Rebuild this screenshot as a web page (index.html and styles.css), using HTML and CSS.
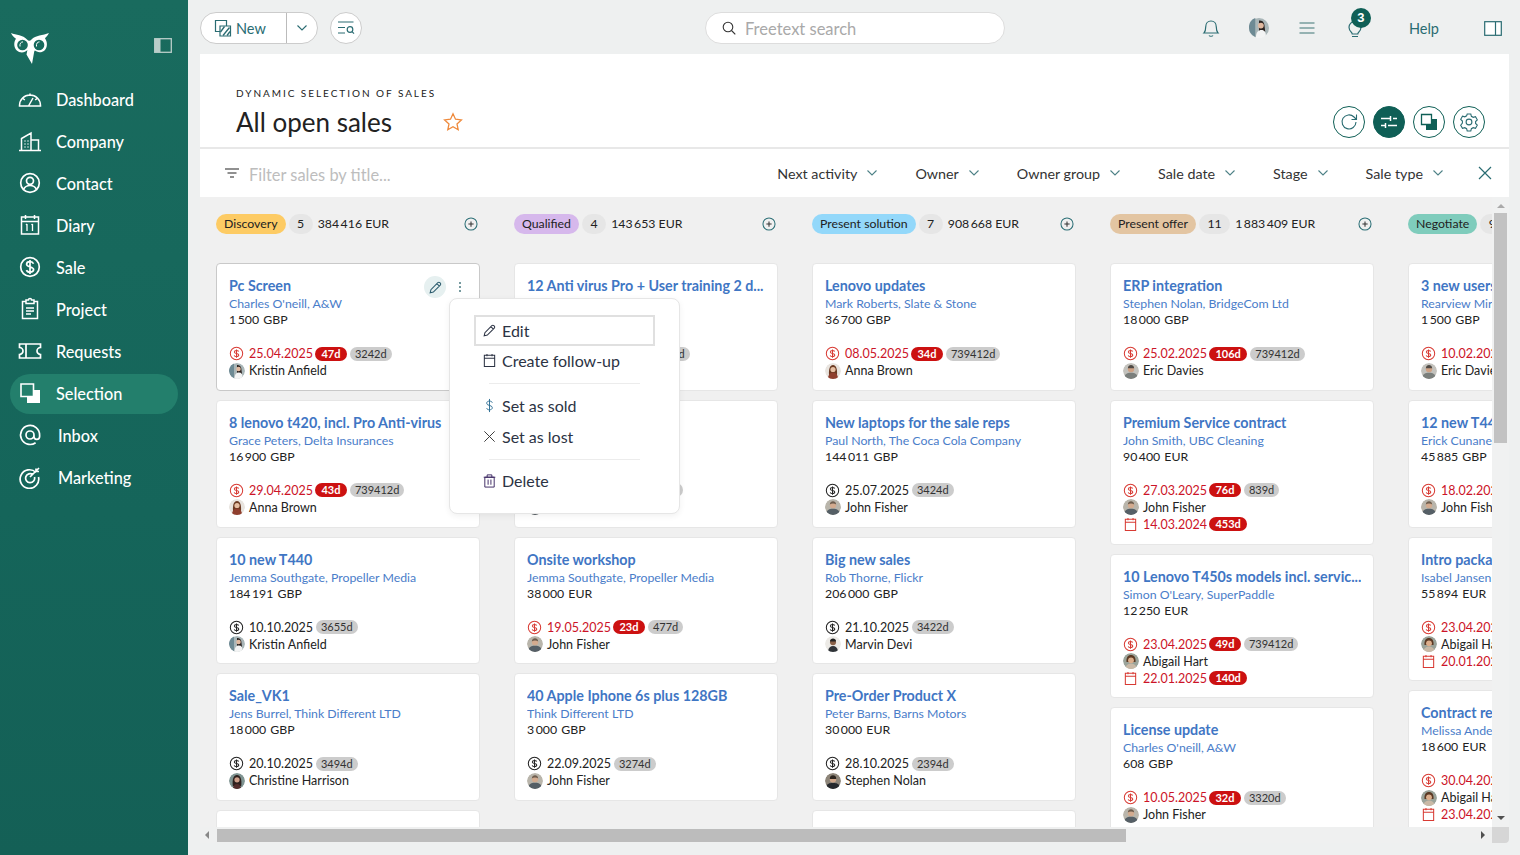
FILE: index.html
```html
<!DOCTYPE html>
<html lang="en">
<head>
<meta charset="utf-8">
<title>All open sales</title>
<link rel="stylesheet" href="styles.css">
</head>
<body>
<svg class="sprite" aria-hidden="true">
  <defs>
    <symbol id="i-sale" viewBox="0 0 16 16"><circle cx="8" cy="8" r="6.6" fill="none" stroke="currentColor" stroke-width="1.1"/><path d="M10.3 5.9C9.9 5 9 4.7 8 4.7c-1.3 0-2.3.6-2.3 1.7 0 2.4 4.7 1 4.7 3.3 0 1.1-1.1 1.6-2.4 1.6-1.1 0-2.1-.4-2.5-1.3M8 3.6v8.8" fill="none" stroke="currentColor" stroke-width="1.1"/></symbol>
    <symbol id="i-cal" viewBox="0 0 16 16"><path d="M2.5 2.5h11v12h-11zM2.5 5.6h11M5.3 1v2.4M10.7 1v2.4" fill="none" stroke="currentColor" stroke-width="1.1"/></symbol>
    <symbol id="i-chev" viewBox="0 0 12 8"><path d="M1.5 1.5 6 6l4.5-4.500" fill="none" stroke="currentColor" stroke-width="1.1"/></symbol>
    <symbol id="i-plus" viewBox="0 0 16 16"><circle cx="8" cy="8" r="6.900" fill="none" stroke="#2c6f76" stroke-width="1.2"/><path d="M8 5v6M5 8h6" fill="none" stroke="#333" stroke-width="1.2"/></symbol>
    <symbol id="i-pen" viewBox="0 0 16 16"><path d="M2.3 13.7l.8-3.400 7.400-7.400a1.500 1.500 0 0 1 2.100 0l.5.5a1.500 1.500 0 0 1 0 2.100l-7.400 7.400zM9.500 3.900l2.600 2.600" fill="none" stroke="currentColor" stroke-width="1.1"/></symbol>
    <symbol id="a-kristin" viewBox="0 0 16 16"><circle cx="8" cy="8" r="8" fill="#a9b6b8"/><path d="M0 8a8 8 0 0 0 5 7V0A8 8 0 0 0 0 8" fill="#6d8a94"/><path d="M8 2c3-.5 4.500 2 4.500 5l.5 4H8z" fill="#2b2320"/><circle cx="9.500" cy="6" r="2.300" fill="#e0b9a0"/><path d="M5.500 16c0-5 2-6.500 4.500-6.500s3.500 2 3.500 4.500a8 8 0 0 1-8 2" fill="#f3f4f4"/></symbol>
    <symbol id="a-anna" viewBox="0 0 16 16"><circle cx="8" cy="8" r="8" fill="#e8e4df"/><path d="M4 12c-.5-6 1-10 4-10s4.500 4 4 10z" fill="#6b3a22"/><circle cx="8" cy="6.500" r="2.600" fill="#e6bfa3"/><path d="M3 15c.6-4 2.500-5.500 5-5.500s4.400 1.500 5 5.500a8 8 0 0 1-10 0" fill="#8f3f2e"/></symbol>
    <symbol id="a-john" viewBox="0 0 16 16"><circle cx="8" cy="8" r="8" fill="#b9b5ab"/><circle cx="8" cy="6" r="3.200" fill="#d3ab8f"/><path d="M4.800 5.500C5 3 6.500 2.300 8 2.300s3 .7 3.200 3.200C9.500 4.300 6.500 4.300 4.800 5.500" fill="#6d5d4e"/><path d="M1.500 12.700C3 10 5.500 9.700 8 9.700s5 .3 6.500 3A8 8 0 0 1 8 16a8 8 0 0 1-6.500-3.300" fill="#555f66"/></symbol>
    <symbol id="a-eric" viewBox="0 0 16 16"><circle cx="8" cy="8" r="8" fill="#c3c2bd"/><circle cx="8" cy="6" r="3.200" fill="#cfa285"/><path d="M4.800 5.200C5 2.800 6.500 2 8 2s3 .8 3.200 3.200z" fill="#4f4a45"/><path d="M1.500 12.700C3 10 5.500 9.700 8 9.700s5 .3 6.500 3A8 8 0 0 1 8 16a8 8 0 0 1-6.500-3.300" fill="#7b7f7c"/></symbol>
    <symbol id="a-abigail" viewBox="0 0 16 16"><circle cx="8" cy="8" r="8" fill="#9aa39a"/><path d="M3.500 9c-.5-4.500 1.500-7 4.500-7s5 2.500 4.500 7z" fill="#5b3a25"/><circle cx="8" cy="7.300" r="2.900" fill="#dcae8c"/><path d="M2.500 14C4 11 6 10.500 8 10.500s4 .5 5.500 3.500A8 8 0 0 1 2.500 14" fill="#c9b9a6"/></symbol>
    <symbol id="a-christine" viewBox="0 0 16 16"><circle cx="8" cy="8" r="8" fill="#7f9492"/><path d="M3.800 13c-.8-7 .8-11 4.200-11s5 4 4.200 11z" fill="#2e211e"/><circle cx="8" cy="6.800" r="2.600" fill="#cf9f8a"/><path d="M4 15c.6-3 2-4 4-4s3.400 1 4 4a8 8 0 0 1-8 0" fill="#532d2c"/></symbol>
    <symbol id="a-marvin" viewBox="0 0 16 16"><circle cx="8" cy="8" r="8" fill="#eceae6"/><circle cx="8" cy="6.300" r="3" fill="#8a6148"/><path d="M5 5.600C5 3.300 6.500 2.600 8 2.600s3 .7 3 3z" fill="#222"/><path d="M3 15c.6-3.500 2.500-5 5-5s4.400 1.500 5 5a8 8 0 0 1-10 0" fill="#2f3338"/></symbol>
    <symbol id="a-stephen" viewBox="0 0 16 16"><circle cx="8" cy="8" r="8" fill="#8d8579"/><circle cx="8" cy="6.300" r="3.200" fill="#d1a78a"/><path d="M4.800 6C4.600 3.200 6.300 2.200 8 2.200s3.400 1 3.200 3.800z" fill="#2d2620"/><path d="M1.500 12.700C3 10 5.500 10 8 10s5 0 6.500 2.700A8 8 0 0 1 8 16a8 8 0 0 1-6.500-3.300" fill="#26292d"/></symbol>
  </defs>
</svg>

<div class="app">
  <aside class="sidebar">
    <div class="brand">
      <svg class="logo" viewBox="0 0 40 32"><path d="M1 1c5 2.500 12 1.500 16 6.500 1.500 1.800 3 1.800 4.500.1C25.500 3 33 3.500 39 1c-1.500 3-3.500 4.300-4 5.500 2.500 3 2.800 9-.5 12-2.800 2.500-7.400 2.300-10-.4L22 32l-5.500-9.500.9-4.500c-2.600 3.100-7.700 3.300-10.600.5C3.600 15.500 3.600 10 6 6.800 4.300 5.500 2.300 3.800 1 1z" fill="#fff"/><circle cx="12.500" cy="13" r="5.300" fill="#176a5d"/><circle cx="29" cy="13" r="5.300" fill="#176a5d"/><path d="M10 14.500c-.5-3 1-4.600 3-4.600M26.500 14.500c-.5-3 1-4.600 3-4.600" fill="none" stroke="#fff" stroke-width="1"/><path d="M22 14.500l3 3.500-3 4.500-3-4.500z" fill="#fff"/></svg>
      <svg class="toggle" viewBox="0 0 18 15"><rect x=".7" y=".7" width="16.600" height="13.600" fill="none" stroke="#b9cdc9" stroke-width="1.300"/><rect x="1" y="1" width="5.500" height="13" fill="#b9cdc9"/></svg>
    </div>
    <nav class="nav">
      <a class="nav-item"><svg class="nav-icon" viewBox="0 0 24 24"><path d="M1.500 18.500a10.500 10.500 0 0 1 21 0v.5h-21zM12 6.500V9M5 11.500l1.800 1.500M19 11.500l-1.800 1.500M10.500 19l4.500-8" fill="none" stroke="#fff" stroke-width="1.500"/></svg>Dashboard</a>
      <a class="nav-item"><svg class="nav-icon" viewBox="0 0 24 24"><path d="M1 21.500h22M3.500 21.500V9.500L13 4v17.500M13 11h7.500v10.500M6.500 12h1M9.500 12h1M6.500 15h1M9.500 15h1M6.500 18h1M9.500 18h1" fill="none" stroke="#fff" stroke-width="1.500"/></svg>Company</a>
      <a class="nav-item"><svg class="nav-icon" viewBox="0 0 24 24"><circle cx="12" cy="12" r="9.300" fill="none" stroke="#fff" stroke-width="1.700"/><circle cx="12" cy="9.800" r="3.500" fill="none" stroke="#fff" stroke-width="1.700"/><path d="M5.500 18.500c1.300-3 3.500-4 6.500-4s5.200 1 6.500 4" fill="none" stroke="#fff" stroke-width="1.700"/></svg>Contact</a>
      <a class="nav-item"><svg class="nav-icon" viewBox="0 0 24 24"><path d="M3.500 4h17v17h-17zM3.500 8.500h17M7.500 2v4M16.500 2v4" fill="none" stroke="#fff" stroke-width="1.500"/><path d="M9 11v7M8 12l1-1M14.500 11v7M13.500 12l1-1" fill="none" stroke="#fff" stroke-width="1.300"/></svg>Diary</a>
      <a class="nav-item"><svg class="nav-icon" viewBox="0 0 24 24"><circle cx="12" cy="12" r="9.300" fill="none" stroke="#fff" stroke-width="1.700"/><path d="M15.500 8.700c-.5-1.300-1.900-2-3.500-2-1.900 0-3.400.9-3.400 2.600 0 3.500 7 1.800 7 5.300 0 1.700-1.600 2.500-3.600 2.500-1.700 0-3.100-.7-3.600-2M12 5v14" fill="none" stroke="#fff" stroke-width="1.700"/></svg>Sale</a>
      <a class="nav-item"><svg class="nav-icon" viewBox="0 0 24 24"><path d="M8 4.500H4.500v17h15v-17H16M8 3h2.500a1.500 1.500 0 0 1 3 0H16v3.500H8zM8 11h8M8 14h8M8 17h5" fill="none" stroke="#fff" stroke-width="1.500"/></svg>Project</a>
      <a class="nav-item"><svg class="nav-icon" viewBox="0 0 24 24"><path d="M1.500 5h21v3.500a3.500 3.500 0 0 0 0 7V19h-21v-3.500a3.500 3.500 0 0 0 0-7zM8 5v14" fill="none" stroke="#fff" stroke-width="1.700"/></svg>Requests</a>
      <a class="nav-item active"><svg class="nav-icon" viewBox="0 0 24 24"><path d="M9 9h13v13H9z" fill="#fff"/><path d="M3 3h12.500v12.500H3z" fill="#237f6c" stroke="#fff" stroke-width="1.600"/></svg>Selection</a>
      <a class="nav-item nudge"><svg class="nav-icon" viewBox="0 0 24 24"><path d="M16 12a4 4 0 1 1-8 0 4 4 0 0 1 8 0v1.500a2.800 2.800 0 0 0 5.600 0V12a9.500 9.500 0 1 0-4 7.700" fill="none" stroke="#fff" stroke-width="1.700"/></svg>Inbox</a>
      <a class="nav-item nudge"><svg class="nav-icon" viewBox="0 0 24 24"><path d="M18 7.500A9.300 9.300 0 1 0 20.500 12M14.800 9.500a4.500 4.500 0 1 0 1.700 2.500M12 12l9-9M18 3.500v3h3" fill="none" stroke="#fff" stroke-width="1.700"/></svg>Marketing</a>
    </nav>
  </aside>

  <main class="main">
    <header class="topbar">
      <div class="new-btn">
        <span class="new-main"><svg class="ic-18" viewBox="0 0 18 18"><path d="M1.500 1.500h11v11h-11z" fill="none" stroke="#2a6c72" stroke-width="1.200"/><path d="M6 7h10.500v10H6z" fill="#fff" stroke="#2a6c72" stroke-width="1.200"/><path d="M6.500 13l4-5.500M9 16.500l6.500-8M13 16.500l3-4" fill="none" stroke="#2a6c72" stroke-width="1.300"/></svg>New</span>
        <span class="new-drop"><svg class="chev-btn" viewBox="0 0 12 8"><use href="#i-chev"/></svg></span>
      </div>
      <button class="round-btn"><svg class="ic-18" viewBox="0 0 18 18"><path d="M1 3h15.500M1 8.500h7M1 14h7" fill="none" stroke="#2a6c72" stroke-width="1.200"/><circle cx="13" cy="10.500" r="2.800" fill="none" stroke="#2a6c72" stroke-width="1.200"/><path d="M15 12.700l2 2" fill="none" stroke="#2a6c72" stroke-width="1.200"/></svg></button>
      <div class="search"><svg class="ic-14" viewBox="0 0 14 14"><circle cx="6" cy="6" r="4.800" fill="none" stroke="#333" stroke-width="1.100"/><path d="M9.500 9.500l3.800 3.800" fill="none" stroke="#333" stroke-width="1.100"/></svg><span>Freetext search</span></div>
      <div class="top-right">
        <svg class="top-ic bell" viewBox="0 0 18 20"><path d="M2 15c1.500-1.500 1.700-3 1.700-6 0-3.500 2.200-6 5.300-6s5.300 2.500 5.300 6c0 3 .2 4.500 1.700 6zM7 17.500c.8 1 3.200 1 4 0" fill="none" stroke="#2a6c72" stroke-width="1.200"/></svg>
        <svg class="top-avatar" viewBox="0 0 16 16"><use href="#a-kristin"/></svg>
        <svg class="top-ic menu-ic" viewBox="0 0 18 14"><path d="M1.500 2h15M1.500 7h15M1.500 12h15" fill="none" stroke="#3c7474" stroke-width="1.200"/></svg>
        <span class="bulb"><svg class="top-ic" viewBox="0 0 18 20"><path d="M5.500 14.500C3.800 13 3 11.300 3 9.300a6 6 0 0 1 12 0c0 2-.8 3.700-2.500 5.200-.5.500-.7 1-.7 1.500H6.200c0-.5-.2-1-.7-1.500zM6 18.500h6" fill="none" stroke="#2a6c72" stroke-width="1.200"/></svg><b class="badge">3</b></span>
        <span class="help">Help</span>
        <svg class="top-ic panel-ic" viewBox="0 0 18 15"><rect x=".7" y=".7" width="16.600" height="13.600" fill="#fff" stroke="#2a6c72" stroke-width="1.200"/><path d="M11.500 1v13" stroke="#2a6c72" stroke-width="1.200"/></svg>
      </div>
    </header>

    <section class="panel">
      <div class="head">
        <div class="head-titles">
          <div class="eyebrow">DYNAMIC SELECTION OF SALES</div>
          <div class="title-row"><h1>All open sales</h1><svg class="star" viewBox="0 0 20 20"><path d="M10 1.800l2.500 5.400 5.900.7-4.400 4 1.200 5.800L10 14.800l-5.200 2.900L6 11.900l-4.400-4 5.900-.7z" fill="none" stroke="#ef8a3c" stroke-width="1.300"/></svg></div>
        </div>
        <div class="actions">
          <button class="act"><svg class="ic-20" viewBox="0 0 20 20"><path d="M17 10a7 7 0 1 1-2-5l2.500 2.500M17.500 2.500v5h-5" fill="none" stroke="#2a6c72" stroke-width="1.100"/></svg></button>
          <button class="act filled"><svg class="ic-20" viewBox="0 0 20 20"><path d="M2 6.500h9M14 6.500h4M11.500 4v5M2 13.500h4M9 13.500h9M6.500 11v5" fill="none" stroke="#fff" stroke-width="1.500"/></svg></button>
          <button class="act"><svg class="ic-20" viewBox="0 0 20 20"><path d="M7 7h11v11H7z" fill="#0f5f56"/><path d="M2.500 2.500h10v10h-10z" fill="#fff" stroke="#0f5f56" stroke-width="1.300"/></svg></button>
          <button class="act"><svg class="ic-20" viewBox="0 0 20 20"><path d="M8.200 2h3.600l.6 2.300 1.800 1 2.300-.6 1.800 3.100-1.700 1.700v2l1.700 1.700-1.800 3.100-2.300-.6-1.800 1-.6 2.300H8.200l-.6-2.300-1.800-1-2.300.6-1.800-3.100L3.400 11V9L1.700 7.300l1.800-3.100 2.300.6 1.800-1z" fill="none" stroke="#2a6c72" stroke-width="1.100"/><circle cx="10" cy="10" r="2.900" fill="none" stroke="#2a6c72" stroke-width="1.100"/></svg></button>
        </div>
      </div>

      <div class="filters">
        <svg class="filter-ic" viewBox="0 0 14 10"><path d="M0 1h14M2.500 5h9M5 9h4" fill="none" stroke="#222" stroke-width="1.200"/></svg>
        <span class="filter-input">Filter sales by title...</span>
        <div class="filter-list">
          <span class="fl">Next activity<svg class="chev" viewBox="0 0 12 8"><use href="#i-chev"/></svg></span>
          <span class="fl">Owner<svg class="chev" viewBox="0 0 12 8"><use href="#i-chev"/></svg></span>
          <span class="fl">Owner group<svg class="chev" viewBox="0 0 12 8"><use href="#i-chev"/></svg></span>
          <span class="fl">Sale date<svg class="chev" viewBox="0 0 12 8"><use href="#i-chev"/></svg></span>
          <span class="fl">Stage<svg class="chev" viewBox="0 0 12 8"><use href="#i-chev"/></svg></span>
          <span class="fl">Sale type<svg class="chev" viewBox="0 0 12 8"><use href="#i-chev"/></svg></span>
          <svg class="close" viewBox="0 0 14 14"><path d="M1 1l12 12M13 1L1 13" fill="none" stroke="#2a6c72" stroke-width="1.200"/></svg>
        </div>
      </div>

      <div class="scroller">
        <div class="board">

          <div class="col">
            <div class="col-head"><span class="stage s-discovery">Discovery</span><span class="count">5</span><span class="total">384&#8201;416 EUR</span><svg class="add" viewBox="0 0 16 16"><use href="#i-plus"/></svg></div>
            <article class="card hovered">
              <div class="card-tools"><span class="pen"><svg viewBox="0 0 16 16"><use href="#i-pen"/></svg></span><span class="dots"><i></i><i></i><i></i></span></div>
              <a class="c-title">Pc Screen</a><a class="c-person">Charles O'neill, A&amp;W</a><div class="c-amount">1&#8201;500 GBP</div>
              <div class="row late"><svg class="ri"><use href="#i-sale"/></svg>25.04.2025<b class="pill red">47d</b><b class="pill grey">3242d</b></div>
              <div class="row"><svg class="ava"><use href="#a-kristin"/></svg>Kristin Anfield</div>
            </article>
            <article class="card">
              <a class="c-title">8 lenovo t420, incl. Pro Anti-virus</a><a class="c-person">Grace Peters, Delta Insurances</a><div class="c-amount">16&#8201;900 GBP</div>
              <div class="row late"><svg class="ri"><use href="#i-sale"/></svg>29.04.2025<b class="pill red">43d</b><b class="pill grey">739412d</b></div>
              <div class="row"><svg class="ava"><use href="#a-anna"/></svg>Anna Brown</div>
            </article>
            <article class="card">
              <a class="c-title">10 new T440</a><a class="c-person">Jemma Southgate, Propeller Media</a><div class="c-amount">184&#8201;191 GBP</div>
              <div class="row"><svg class="ri"><use href="#i-sale"/></svg>10.10.2025<b class="pill grey">3655d</b></div>
              <div class="row"><svg class="ava"><use href="#a-kristin"/></svg>Kristin Anfield</div>
            </article>
            <article class="card">
              <a class="c-title">Sale_VK1</a><a class="c-person">Jens Burrel, Think Different LTD</a><div class="c-amount">18&#8201;000 GBP</div>
              <div class="row"><svg class="ri"><use href="#i-sale"/></svg>20.10.2025<b class="pill grey">3494d</b></div>
              <div class="row"><svg class="ava"><use href="#a-christine"/></svg>Christine Harrison</div>
            </article>
            <article class="card stub"></article>
          </div>

          <div class="col">
            <div class="col-head"><span class="stage s-qualified">Qualified</span><span class="count">4</span><span class="total">143&#8201;653 EUR</span><svg class="add" viewBox="0 0 16 16"><use href="#i-plus"/></svg></div>
            <article class="card">
              <a class="c-title">12 Anti virus Pro + User training 2 d...</a><a class="c-person">Charles O'neill, A&amp;W</a><div class="c-amount">12&#8201;000 GBP</div>
              <div class="row late"><svg class="ri"><use href="#i-sale"/></svg>25.04.2025<b class="pill red">47d</b><b class="pill grey">3242d</b></div>
              <div class="row"><svg class="ava"><use href="#a-john"/></svg>John Fisher</div>
            </article>
            <article class="card">
              <a class="c-title">Onsite training</a><a class="c-person">Grace Peters</a><div class="c-amount">9&#8201;000 GBP</div>
              <div class="row late"><svg class="ri"><use href="#i-sale"/></svg>19.05.2025<b class="pill red">23d</b><b class="pill grey">477d</b></div>
              <div class="row"><svg class="ava"><use href="#a-john"/></svg>John Fisher</div>
            </article>
            <article class="card">
              <a class="c-title">Onsite workshop</a><a class="c-person">Jemma Southgate, Propeller Media</a><div class="c-amount">38&#8201;000 EUR</div>
              <div class="row late"><svg class="ri"><use href="#i-sale"/></svg>19.05.2025<b class="pill red">23d</b><b class="pill grey">477d</b></div>
              <div class="row"><svg class="ava"><use href="#a-john"/></svg>John Fisher</div>
            </article>
            <article class="card">
              <a class="c-title">40 Apple Iphone 6s plus 128GB</a><a class="c-person">Think Different LTD</a><div class="c-amount">3&#8201;000 GBP</div>
              <div class="row"><svg class="ri"><use href="#i-sale"/></svg>22.09.2025<b class="pill grey">3274d</b></div>
              <div class="row"><svg class="ava"><use href="#a-john"/></svg>John Fisher</div>
            </article>
          </div>

          <div class="col">
            <div class="col-head"><span class="stage s-solution">Present solution</span><span class="count">7</span><span class="total">908&#8201;668 EUR</span><svg class="add" viewBox="0 0 16 16"><use href="#i-plus"/></svg></div>
            <article class="card">
              <a class="c-title">Lenovo updates</a><a class="c-person">Mark Roberts, Slate &amp; Stone</a><div class="c-amount">36&#8201;700 GBP</div>
              <div class="row late"><svg class="ri"><use href="#i-sale"/></svg>08.05.2025<b class="pill red">34d</b><b class="pill grey">739412d</b></div>
              <div class="row"><svg class="ava"><use href="#a-anna"/></svg>Anna Brown</div>
            </article>
            <article class="card">
              <a class="c-title">New laptops for the sale reps</a><a class="c-person">Paul North, The Coca Cola Company</a><div class="c-amount">144&#8201;011 GBP</div>
              <div class="row"><svg class="ri"><use href="#i-sale"/></svg>25.07.2025<b class="pill grey">3424d</b></div>
              <div class="row"><svg class="ava"><use href="#a-john"/></svg>John Fisher</div>
            </article>
            <article class="card">
              <a class="c-title">Big new sales</a><a class="c-person">Rob Thorne, Flickr</a><div class="c-amount">206&#8201;000 GBP</div>
              <div class="row"><svg class="ri"><use href="#i-sale"/></svg>21.10.2025<b class="pill grey">3422d</b></div>
              <div class="row"><svg class="ava"><use href="#a-marvin"/></svg>Marvin Devi</div>
            </article>
            <article class="card">
              <a class="c-title">Pre-Order Product X</a><a class="c-person">Peter Barns, Barns Motors</a><div class="c-amount">30&#8201;000 EUR</div>
              <div class="row"><svg class="ri"><use href="#i-sale"/></svg>28.10.2025<b class="pill grey">2394d</b></div>
              <div class="row"><svg class="ava"><use href="#a-stephen"/></svg>Stephen Nolan</div>
            </article>
            <article class="card stub"></article>
          </div>

          <div class="col">
            <div class="col-head"><span class="stage s-offer">Present offer</span><span class="count">11</span><span class="total">1&#8201;883&#8201;409 EUR</span><svg class="add" viewBox="0 0 16 16"><use href="#i-plus"/></svg></div>
            <article class="card">
              <a class="c-title">ERP integration</a><a class="c-person">Stephen Nolan, BridgeCom Ltd</a><div class="c-amount">18&#8201;000 GBP</div>
              <div class="row late"><svg class="ri"><use href="#i-sale"/></svg>25.02.2025<b class="pill red">106d</b><b class="pill grey">739412d</b></div>
              <div class="row"><svg class="ava"><use href="#a-eric"/></svg>Eric Davies</div>
            </article>
            <article class="card">
              <a class="c-title">Premium Service contract</a><a class="c-person">John Smith, UBC Cleaning</a><div class="c-amount">90&#8201;400 EUR</div>
              <div class="row late"><svg class="ri"><use href="#i-sale"/></svg>27.03.2025<b class="pill red">76d</b><b class="pill grey">839d</b></div>
              <div class="row"><svg class="ava"><use href="#a-john"/></svg>John Fisher</div>
              <div class="row late"><svg class="ri"><use href="#i-cal"/></svg>14.03.2024<b class="pill red">453d</b></div>
            </article>
            <article class="card">
              <a class="c-title">10 Lenovo T450s models incl. servic...</a><a class="c-person">Simon O'Leary, SuperPaddle</a><div class="c-amount">12&#8201;250 EUR</div>
              <div class="row late"><svg class="ri"><use href="#i-sale"/></svg>23.04.2025<b class="pill red">49d</b><b class="pill grey">739412d</b></div>
              <div class="row"><svg class="ava"><use href="#a-abigail"/></svg>Abigail Hart</div>
              <div class="row late"><svg class="ri"><use href="#i-cal"/></svg>22.01.2025<b class="pill red">140d</b></div>
            </article>
            <article class="card">
              <a class="c-title">License update</a><a class="c-person">Charles O'neill, A&amp;W</a><div class="c-amount">608 GBP</div>
              <div class="row late"><svg class="ri"><use href="#i-sale"/></svg>10.05.2025<b class="pill red">32d</b><b class="pill grey">3320d</b></div>
              <div class="row"><svg class="ava"><use href="#a-john"/></svg>John Fisher</div>
            </article>
          </div>

          <div class="col">
            <div class="col-head"><span class="stage s-negotiate">Negotiate</span><span class="count">9</span><span class="total">774&#8201;120 EUR</span><svg class="add" viewBox="0 0 16 16"><use href="#i-plus"/></svg></div>
            <article class="card">
              <a class="c-title">3 new users</a><a class="c-person">Rearview Mirrors</a><div class="c-amount">1&#8201;500 GBP</div>
              <div class="row late"><svg class="ri"><use href="#i-sale"/></svg>10.02.2025</div>
              <div class="row"><svg class="ava"><use href="#a-eric"/></svg>Eric Davies</div>
            </article>
            <article class="card">
              <a class="c-title">12 new T440</a><a class="c-person">Erick Cunane</a><div class="c-amount">45&#8201;885 GBP</div>
              <div class="row late"><svg class="ri"><use href="#i-sale"/></svg>18.02.2025</div>
              <div class="row"><svg class="ava"><use href="#a-john"/></svg>John Fisher</div>
            </article>
            <article class="card">
              <a class="c-title">Intro package</a><a class="c-person">Isabel Jansen</a><div class="c-amount">55&#8201;894 EUR</div>
              <div class="row late"><svg class="ri"><use href="#i-sale"/></svg>23.04.2025</div>
              <div class="row"><svg class="ava"><use href="#a-abigail"/></svg>Abigail Hart</div>
              <div class="row late"><svg class="ri"><use href="#i-cal"/></svg>20.01.2025</div>
            </article>
            <article class="card">
              <a class="c-title">Contract renewal</a><a class="c-person">Melissa Anderson</a><div class="c-amount">18&#8201;600 EUR</div>
              <div class="row late"><svg class="ri"><use href="#i-sale"/></svg>30.04.2025</div>
              <div class="row"><svg class="ava"><use href="#a-abigail"/></svg>Abigail Hart</div>
              <div class="row late"><svg class="ri"><use href="#i-cal"/></svg>23.04.2025</div>
            </article>
          </div>

        </div>
        <div class="vbar"><i class="tri up"></i><span class="vthumb"></span><i class="tri down"></i></div>
        <div class="hbar"><i class="tri left"></i><span class="hthumb"></span><i class="tri right"></i></div>
        <div class="corner"></div>
      </div>

      <div class="menu">
        <div class="m-item focus"><svg class="m-ic" viewBox="0 0 16 16"><use href="#i-pen"/></svg>Edit</div>
        <div class="m-item"><svg class="m-ic" viewBox="0 0 16 16"><use href="#i-cal"/></svg>Create follow-up</div>
        <hr class="m-sep">
        <div class="m-item"><svg class="m-ic" viewBox="0 0 16 16"><path d="M11 5C10.600 3.800 9.400 3.300 8 3.300 6.300 3.300 5 4.100 5 5.600c0 3.100 6 1.600 6 4.700 0 1.500-1.400 2.300-3 2.300-1.500 0-2.700-.6-3.100-1.800M8 1v14" fill="none" stroke="#2a6c92" stroke-width="1"/></svg>Set as sold</div>
        <div class="m-item"><svg class="m-ic" viewBox="0 0 16 16"><path d="M2.500 2.500l11 11M13.500 2.500l-11 11" fill="none" stroke="#333" stroke-width="1"/></svg>Set as lost</div>
        <hr class="m-sep tight">
        <div class="m-item"><svg class="m-ic" viewBox="0 0 16 16"><path d="M3 4.500h10v10.500H3zM1.800 4.500h12.400M5.500 4.500V2h5v2.500M6.500 7v5.500M9.500 7v5.500" fill="none" stroke="#3a2560" stroke-width="1"/></svg>Delete</div>
      </div>
    </section>
  </main>
</div>
</body>
</html>
```

FILE: styles.css
```css
* { box-sizing: border-box; }
html, body { margin: 0; height: 100%; }
body {
  width: 1520px;
  height: 855px;
  overflow: hidden;
  font-family: Lato, "Noto Sans", sans-serif;
  color: #222;
  background: #eef0f0;
}
.sprite { width: 0; height: 0; display: block; overflow: hidden; }
.app { display: flex; height: 855px; }

/* Sidebar */
.sidebar {
  flex: 0 0 188px;
  background: linear-gradient(180deg, #196b5e 0%, #15655a 60%, #146056 100%);
  color: #fff;
}
.brand { height: 80px; display: flex; align-items: flex-start; justify-content: space-between; padding: 32px 16px 0 10px; }
.logo { width: 40px; height: 32px; }
.toggle { width: 18px; height: 15px; margin-top: 6px; }
.nav { display: flex; flex-direction: column; gap: 2px; padding: 0 10px; }
.nav-item {
  height: 40px;
  display: flex;
  align-items: center;
  gap: 14px;
  padding: 0 0 2px 8px;
  border-radius: 20px;
  font-size: 16.3px;
  font-weight: 500;
  color: #fff;
}
.nav-item.active { background: #237f6c; }
.nav-item.nudge { gap: 16px; }
.nav-icon { width: 24px; height: 24px; flex: none; }

/* Main */
.main { flex: 1; display: flex; flex-direction: column; padding: 0 11px 12px 12px; min-width: 0; }
.topbar { flex: 0 0 54px; display: flex; align-items: flex-start; padding-top: 12px; position: relative; }
.new-btn {
  width: 118px;
  height: 32px;
  display: flex;
  background: #fff;
  border: 1px solid #ccc;
  border-radius: 16px;
}
.new-main { flex: 1; display: flex; align-items: center; gap: 4px; padding-left: 13px; font-size: 14.5px; color: #2a6c72; border-right: 1px solid #bbb; }
.new-drop { flex: 0 0 30px; display: flex; align-items: center; justify-content: center; color: #2a6c72; }
.chev-btn { width: 12px; height: 8px; }
.ic-18 { width: 18px; height: 18px; }
.ic-14 { width: 14px; height: 14px; }
.ic-20 { width: 20px; height: 20px; }
.round-btn {
  width: 32px;
  height: 32px;
  margin-left: 12px;
  padding: 0;
  display: flex;
  align-items: center;
  justify-content: center;
  background: #fff;
  border: 1px solid #ccc;
  border-radius: 50%;
}
.search {
  width: 300px;
  height: 32px;
  margin: 0 0 0 343px;
  padding-left: 16px;
  display: flex;
  align-items: center;
  gap: 9px;
  background: #fff;
  border: 1px solid #ddd;
  border-radius: 16px;
  font-size: 16.5px;
  color: #a9a9a9;
}
.search span { padding-top: 2px; }
.top-right { margin-left: auto; display: flex; align-items: center; height: 32px; padding-right: 7px; }
.top-ic { width: 18px; height: 20px; display: block; }
.bell { margin-right: 28px; }
.top-avatar { width: 20px; height: 20px; margin: 0 29px 0 1px; }
.menu-ic { height: 14px; margin-right: 30px; }
.bulb { position: relative; display: block; margin-right: 45px; }
.badge {
  position: absolute;
  left: 5px;
  top: -10px;
  width: 20px;
  height: 20px;
  border-radius: 50%;
  background: #0f5f56;
  color: #fff;
  font: 700 13px/20px "Liberation Sans", sans-serif;
  text-align: center;
}
.help { font-size: 14.5px; color: #2a6c72; margin-right: 45px; }
.panel-ic { height: 15px; }

/* Panel */
.panel { flex: 1; min-height: 0; display: flex; flex-direction: column; background: #fff; position: relative; border-bottom-right-radius: 4px; overflow: hidden; }
.head { flex: 0 0 95px; display: flex; justify-content: space-between; padding: 33px 24px 0 36px; border-bottom: 2px solid #e8e8e8; }
.eyebrow { font-size: 10px; line-height: 12px; letter-spacing: 1.96px; color: #222; }
.title-row { display: flex; align-items: center; margin-top: 5px; }
h1 { margin: 0; font-size: 26px; line-height: 36px; font-weight: 400; color: #222; }
.star { width: 20px; height: 20px; margin-left: 51px; }
.actions { display: flex; gap: 8px; padding-top: 19px; }
.act { width: 32px; height: 32px; padding: 0; display: flex; align-items: center; justify-content: center; background: #fff; border: 1px solid #0f5f56; border-radius: 50%; }
.act.filled { background: #0f5f56; }

.filters { flex: 0 0 48px; display: flex; align-items: center; padding: 0 17px 0 25px; }
.filter-ic { width: 14px; height: 10px; }
.filter-input { margin: 2px 0 0 10px; font-size: 16.4px; color: #bdbdbd; }
.filter-list { margin-left: auto; display: flex; align-items: center; gap: 37px; font-size: 14.3px; color: #333; }
.fl { display: flex; align-items: center; gap: 9px; }
.chev { width: 12px; height: 8px; color: #4f8287; }
.close { width: 14px; height: 14px; margin-left: -3px; }

.scroller { flex: 1; min-height: 0; display: grid; grid-template-columns: 1fr 17px; grid-template-rows: 1fr 16px; background: #f0f0f0; }
.board { display: flex; gap: 34px; padding-left: 16px; overflow: hidden; min-height: 0; min-width: 0; }
.col { flex: 0 0 264px; width: 264px; min-width: 0; display: flex; flex-direction: column; gap: 9px; }
.col-head { flex: none; height: 20px; margin: 17px 0 20px; display: flex; align-items: flex-start; font-size: 12.3px; color: #222; position: relative; }
.stage { height: 20px; padding: 0 8px; border-radius: 10px; line-height: 20px; white-space: nowrap; }
.s-discovery { background: #fdcb64; }
.s-qualified { background: #d6b8ec; }
.s-solution { background: #93d8fa; }
.s-offer { background: #e3c5a2; }
.s-negotiate { background: #7fccbc; }
.count { height: 20px; min-width: 24px; margin-left: 3px; padding: 0 8.5px; border-radius: 10px; background: #e6e6e6; line-height: 20px; text-align: center; }
.total { margin-left: 5px; line-height: 20px; white-space: nowrap; }
.add { position: absolute; right: 2px; top: 3px; width: 14px; height: 14px; }

.card {
  position: relative;
  flex: none;
  min-width: 0;
  padding: 13px 12px 10.75px;
  background: #fff;
  border: 1px solid #e6e6e6;
  border-radius: 4px;
  font-size: 12.5px;
}
.card.hovered { border-color: #c9c9c9; }
.card.stub { height: 60px; }
.c-title, .c-person { display: block; white-space: nowrap; overflow: hidden; }
.c-title { height: 18px; line-height: 18px; font-size: 14.3px; font-weight: 700; color: #3f76c4; }
.c-person { height: 17px; line-height: 17px; font-size: 12.3px; color: #4a7dc9; }
.c-amount { height: 17px; line-height: 15px; font-size: 12.3px; word-spacing: 1px; color: #222; margin-bottom: 16px; }
.row { height: 17px; display: flex; align-items: center; white-space: nowrap; font-size: 12.5px; color: #222; }
.row.late { color: #cc1428; }
.ri { width: 15px; height: 15px; flex: none; margin-right: 5px; color: #222; }
.row.late .ri { color: #d83a33; }
.ava { width: 16px; height: 16px; flex: none; margin-right: 4px; border-radius: 50%; }
.pill { height: 14px; margin-left: 3px; padding: 0 5px; border-radius: 7px; font-size: 11px; line-height: 14px; }
.pill.red { margin-left: 2px; padding: 0 6.5px; background: #cc1111; color: #fff; font-weight: 700; }
.pill.grey { background: #cccccc; color: #333; font-weight: 400; }
.card-tools { position: absolute; top: 12px; right: 17px; display: flex; align-items: center; gap: 13px; }
.pen { width: 22px; height: 22px; border-radius: 50%; background: #e6f0f0; color: #2a5a6c; display: flex; align-items: center; justify-content: center; }
.pen svg { width: 15px; height: 15px; }
.dots { display: flex; flex-direction: column; gap: 2px; width: 3px; }
.dots i { width: 2px; height: 2px; background: #4a7a80; border-radius: 50%; }

.vbar { display: flex; flex-direction: column; align-items: center; background: #f0f1f1; padding: 7px 0 7px; }
.vthumb { width: 13px; height: 230px; margin-top: 5px; background: #c2c2c2; }
.tri { display: block; width: 0; height: 0; border-style: solid; border-color: transparent; flex: none; }
.tri.up { border-width: 0 4px 4px; border-bottom-color: #aaa; }
.tri.down { margin-top: auto; border-width: 4px 4px 0; border-top-color: #505050; }
.tri.left { border-width: 4px 4px 4px 0; border-right-color: #888; }
.tri.right { margin-left: auto; border-width: 4px 0 4px 4px; border-left-color: #505050; }
.hbar { display: flex; align-items: center; padding: 0 7px 0 5px; background: #eff0f0; }
.hthumb { width: 909px; height: 13px; margin-left: 8px; background: #bcbcbc; }
.corner { background: #d6d6d6; }

/* Context menu */
.menu {
  position: absolute;
  left: 249px;
  top: 244px;
  width: 231px;
  height: 216px;
  padding: 16px 24px;
  background: #fff;
  border: 1px solid #e6e6e6;
  border-radius: 8px;
  box-shadow: 0 2px 6px rgba(0, 0, 0, .06);
}
.m-item { height: 31px; display: flex; align-items: center; gap: 5px; padding: 0 0 2px 8px; font-size: 16px; color: #2c3344; }
.m-item.focus { padding: 0 0 0 6px; border: 2px solid #e0e0e0; width: 181px; }
.m-ic { width: 15px; height: 15px; flex: none; }
.m-sep { height: 1px; margin: 6px 15px 7px 15px; border: 0; background: #ececec; }
.m-sep.tight { margin-bottom: 6px; }
```
